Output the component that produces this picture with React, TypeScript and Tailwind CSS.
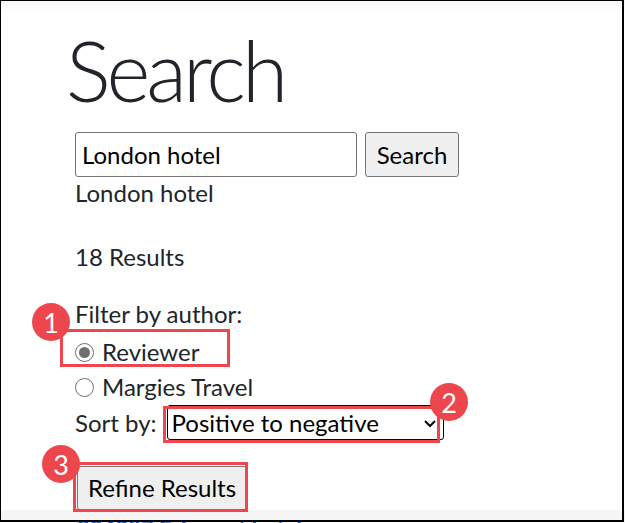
import React from 'react'

function Badge({ n, className }: { n: string; className: string }) {
  return (
    <div
      className={`absolute w-[38px] h-[38px] rounded-full bg-[#ee464d] text-white flex items-center justify-center text-[27px] leading-none font-['Lato',sans-serif] ${className}`}
    >
      {n}
    </div>
  )
}

function Radio({ checked }: { checked?: boolean }) {
  return (
    <span className="w-[19px] h-[19px] rounded-full border-[1.5px] border-[#6f6f6f] bg-white flex items-center justify-center shrink-0">
      {checked && <span className="w-[11px] h-[11px] rounded-full bg-[#6f6f6f]" />}
    </span>
  )
}

export default function App() {
  return (
    <div className="relative w-[625px] h-[523px] overflow-hidden bg-white">
      <div className="absolute inset-0 border-l border-t border-r-2 border-b-2 border-black pointer-events-none z-20 mr-[1px] mb-[1px]" />
      <div className="h-[12px] bg-gradient-to-b from-[#f7f7f7] to-white" />
      <div className="pl-[75px] text-[#212529] font-['Lato',sans-serif] text-[24px]">
        <h1 className="text-[84px] leading-[84px] font-light tracking-[-4px] mt-[16px] -ml-[9px]">Search</h1>

        <div className="flex gap-[8px] mt-[20px] h-[45px]">
          <div className="w-[282px] h-[45px] border border-[#767676] rounded-[3px] px-[6px] flex items-center text-black">
            London hotel
          </div>
          <button className="w-[94px] h-[45px] bg-[#efefef] border border-[#767676] rounded-[3px] text-black">
            Search
          </button>
        </div>

        <div className="leading-[32px]">London hotel</div>

        <div className="leading-[32px] mt-[32px]">18 Results</div>

        <div className="leading-[32px] mt-[25px]">Filter by author:</div>
        <div className="flex items-center gap-[8px] leading-[32px] mt-[6px]">
          <Radio checked />
          <span>Reviewer</span>
        </div>
        <div className="flex items-center gap-[8px] leading-[32px] mt-[3px]">
          <Radio />
          <span>Margies Travel</span>
        </div>

        <div className="flex items-center gap-[10px] mt-[2px] h-[35px]">
          <span>Sort by:</span>
          <div className="w-[277px] h-[35px] border border-black rounded-[3px] flex items-center justify-between pl-[4px] pr-[6px] text-black">
            <span>Positive to negative</span>
            <svg width="14" height="10" viewBox="0 0 14 10" fill="none" stroke="black" strokeWidth="2">
              <path d="M2 3l5 5 5-5" />
            </svg>
          </div>
        </div>

        <button className="mt-[26px] h-[44px] px-[10px] ml-[2px] bg-[#efefef] border border-[#767676] rounded-[3px] text-black">
          Refine Results
        </button>
      </div>
      <div className="bg-[#f5f5f5] h-[20px] pl-[77px] text-[22px] font-bold text-[#0d5fd8] leading-none pt-[8px] font-['Lato',sans-serif]">
        904387 Fairmont hotel
      </div>

      <div className="absolute left-[60px] top-[329px] w-[170px] h-[38px] border-[3px] border-[#ee464d]" />
      <div className="absolute left-[163px] top-[406px] w-[277px] h-[37px] border-[3px] border-[#ee464d]" />
      <div className="absolute left-[73px] top-[462px] w-[175px] h-[50px] border-[3px] border-[#ee464d]" />

      <Badge n="1" className="left-[32px] top-[303px]" />
      <Badge n="2" className="left-[430px] top-[383px]" />
      <Badge n="3" className="left-[42px] top-[445px]" />
    </div>
  )
}
